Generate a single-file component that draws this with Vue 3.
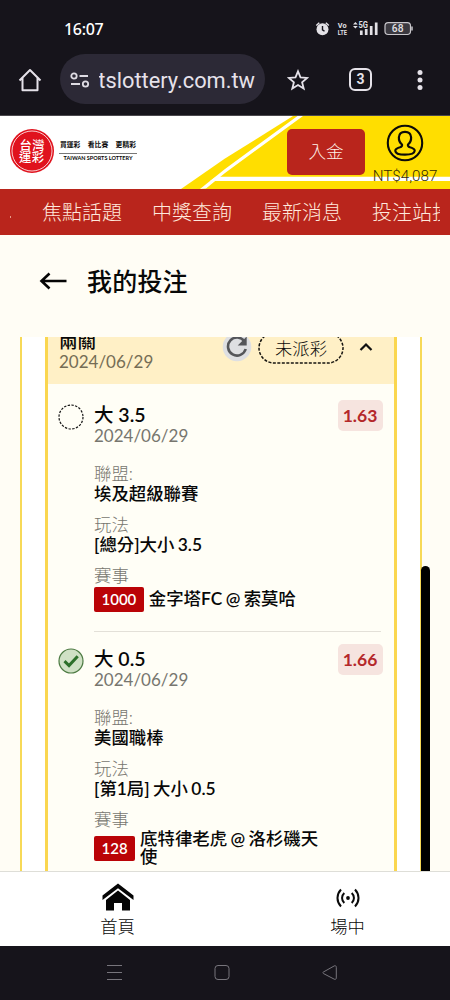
<script setup>
const nav = ['焦點話題', '中獎查詢', '最新消息', '投注站投']
const bets = [
  { pick: '大 3.5', date: '2024/06/29', odds: '1.63', won: false, league: '埃及超級聯賽', play: '[總分]大小 3.5', code: '1000', match: '金字塔FC @ 索莫哈' },
  { pick: '大 0.5', date: '2024/06/29', odds: '1.66', won: true, league: '美國職棒', play: '[第1局] 大小 0.5', code: '128', match: '底特律老虎 @ 洛杉磯天使' },
]
</script>

<template>
  <div class="phone">
    <div class="status">
      <span class="clock">16:07</span>
      <svg class="indicators" width="100" height="20" viewBox="315 18 100 20">
        <circle cx="322.5" cy="29.3" r="6" fill="#e3e1e6" />
        <path d="M316.3 25.5l3-2.7M325.8 22.8l3 2.7" stroke="#e3e1e6" stroke-width="1.5" />
        <path d="M322.5 26v3.8l2 1.5" fill="none" stroke="#16141b" stroke-width="1.4" />
        <text x="337.8" y="28" font-size="7.5" font-weight="700" textLength="8.7" lengthAdjust="spacingAndGlyphs">Vo</text>
        <text x="337.8" y="35" font-size="8" font-weight="700" textLength="9.2" lengthAdjust="spacingAndGlyphs">LTE</text>
        <path d="M353 24.5l2.4-2.5 2.4 2.5zM353 26l2.4 2.5 2.4-2.5z" fill="#e3e1e6" />
        <text x="358.5" y="28.3" font-size="8.5" font-weight="700" textLength="9.5" lengthAdjust="spacingAndGlyphs">5G</text>
        <path d="M361.3 30.5v4.5M366.2 29v6M371.2 26v9M376.2 22.5v12.5" stroke="#e3e1e6" stroke-width="2.7" />
        <rect x="385" y="22.7" width="25.5" height="11.8" rx="3.2" fill="#3b3940" stroke="#c9c7cc" stroke-width="1.2" />
        <path d="M412 26.5v4" stroke="#c9c7cc" stroke-width="1.5" />
        <text x="391.8" y="32.3" font-size="10.2" font-weight="500" textLength="11.8">68</text>
      </svg>
    </div>

    <div class="browser">
      <svg class="home" width="24" height="26" viewBox="0 0 24 26" fill="none" stroke="#e5e2e9" stroke-width="2">
        <path d="M1.5 13.5L12 3l10.5 10.5M4.5 11v12.3h15V11" stroke-linejoin="round" />
      </svg>
      <div class="url">
        <svg width="20" height="16" viewBox="0 0 20 16" fill="none" stroke="#dedbe3" stroke-width="1.8">
          <circle cx="4" cy="4" r="2.7" /><path d="M9.5 4h8.5M1 12h9" /><circle cx="15.5" cy="12" r="2.7" />
        </svg>
        <div class="addr"><span>tslottery.com.tw</span></div>
      </div>
      <svg class="star" width="22" height="22" viewBox="0 0 22 22">
        <path d="M11 2.3l2.5 6.1 6.6.5-5 4.3 1.6 6.4L11 16.1l-5.7 3.5 1.6-6.4-5-4.3 6.6-.5z" fill="none" stroke="#e5e2e9" stroke-width="1.8" />
      </svg>
      <div class="tabs">3</div>
      <svg class="dots" width="6" height="22" viewBox="0 0 6 22" fill="#e5e2e9">
        <circle cx="3" cy="3.5" r="2.5" /><circle cx="3" cy="11" r="2.5" /><circle cx="3" cy="18.5" r="2.5" />
      </svg>
    </div>

    <header class="header">
      <svg class="stripes" width="450" height="73" viewBox="0 116 450 73">
        <rect y="116" width="450" height="73" fill="#fff" />
        <path d="M181 189L225 158.5 293 116H450V189z" fill="#ffde00" />
        <path d="M200 189L225 169 297.5 116h5.5L225 173 206 188.5z" fill="#fff" />
        <path d="M216 176.7H450v4.4H210z" fill="#fff" />
      </svg>
      <div class="brand">
        <svg width="46" height="46" viewBox="0 0 46 46">
          <circle cx="22" cy="22" r="22" fill="#e0121d" />
          <circle cx="22" cy="22" r="20" fill="none" stroke="#fff" stroke-width=".8" />
          <text x="9.5" y="20.5" textLength="25">台灣</text>
          <text x="9" y="33" textLength="25">運彩</text>
        </svg>
        <div class="slogan">
          <div class="zh"><span>買運彩</span><span>看比賽</span><span>更精彩</span></div>
          <div class="en">TAIWAN SPORTS LOTTERY</div>
        </div>
      </div>
      <button class="deposit">入金</button>
      <div class="account">
        <svg width="38" height="38" viewBox="0 0 38 38" fill="none" stroke="#0c0b08">
          <circle cx="19" cy="19" r="17.2" stroke-width="2.1" />
          <path d="M16 20.5c-2.5-2-3.3-4-3.1-7.2.2-3.4 2.6-5.5 6.1-5.5s5.9 2.1 6.1 5.5c.2 3.2-.6 5.2-3.1 7.2-.3 1.5.4 2.3 2 2.8 2.8.8 4.8 1.9 4.7 3.5-.2 2.4-4.5 3.9-9.7 3.9s-9.5-1.5-9.7-3.9c-.1-1.6 1.9-2.7 4.7-3.5 1.6-.5 2.3-1.3 2-2.8z" stroke-width="2.2" />
        </svg>
        <span>NT$4,087</span>
      </div>
    </header>

    <nav class="nav">
      <i></i>
      <div class="links"><span v-for="n in nav" :key="n">{{ n }}</span></div>
    </nav>

    <div class="title">
      <svg width="28" height="20" viewBox="0 0 28 20" fill="none" stroke="#050505" stroke-width="2.6">
        <path d="M27.5 10H2.5M10.5 2.5L2.5 10l8 7.5" />
      </svg>
      <h1>我的投注</h1>
    </div>

    <main class="list">
      <div class="scroll">
        <section class="ticket">
          <div class="tickethead">
            <div class="kind"><b>兩關</b><span>2024/06/29</span></div>
            <svg class="reload" width="30" height="30" viewBox="0 0 30 30">
              <circle cx="15" cy="15" r="14.3" fill="#dedfe2" />
              <path d="M22.5 9.5A9 9 0 1 0 23.7 17" fill="none" stroke="#55565a" stroke-width="2.6" />
              <path d="M24.7 4.5v9h-9z" fill="#55565a" />
            </svg>
            <div class="pending">
              <svg width="86" height="32" viewBox="0 0 86 32"><rect x="1" y="1" width="84" height="30" rx="15" fill="none" stroke="#171510" stroke-width="1.5" stroke-dasharray="3 1.5" /></svg>
              <span>未派彩</span>
            </div>
            <svg class="caret" width="14" height="10" viewBox="0 0 14 10"><path d="M1.5 8L7 2.5 12.5 8" fill="none" stroke="#111" stroke-width="2.2" /></svg>
          </div>

          <article v-for="b in bets" :key="b.code" class="bet">
            <svg class="mark" width="26" height="26" viewBox="0 0 26 26">
              <template v-if="b.won">
                <circle cx="13" cy="13" r="12" fill="#d0e1c5" stroke="#4c7a42" stroke-width="1.2" />
                <path d="M6.5 13.2l4.5 4.3 8.7-9.3" fill="none" stroke="#2d702a" stroke-width="3" />
              </template>
              <circle v-else cx="13" cy="13" r="12" fill="none" stroke="#171717" stroke-width="1.2" stroke-dasharray="2.4 1.37" />
            </svg>
            <div class="body">
              <div class="top">
                <div><div class="pick">{{ b.pick }}</div><div class="date">{{ b.date }}</div></div>
                <span class="odds">{{ b.odds }}</span>
              </div>
              <dl>
                <dt>聯盟:</dt><dd>{{ b.league }}</dd>
                <dt>玩法</dt><dd>{{ b.play }}</dd>
                <dt>賽事</dt>
                <dd class="match"><em>{{ b.code }}</em><span>{{ b.match }}</span></dd>
              </dl>
            </div>
          </article>
        </section>
      </div>
      <div class="thumb"></div>
    </main>

    <footer class="bottom">
      <div class="tab">
        <svg width="32" height="28" viewBox="0 0 32 28" fill="#050505">
          <path d="M.5 12.5L16 .5l15.5 12v4.5L16 5.2.5 17z" />
          <path d="M4 17L16 7.5 28 17v10.5h-8V20h-8v7.5H4z" />
        </svg>
        <span>首頁</span>
      </div>
      <div class="tab live">
        <svg width="24" height="20" viewBox="0 0 24 20" fill="none" stroke="#0a0a0a" stroke-width="2">
          <circle cx="12" cy="10" r="1.9" fill="#0a0a0a" stroke="none" />
          <path d="M8.3 5c-3 2.8-3 7.2 0 10M15.7 5c3 2.8 3 7.2 0 10M5 1.5c-4.7 5-4.7 12 0 17M19 1.5c4.7 5 4.7 12 0 17" />
        </svg>
        <span>場中</span>
      </div>
    </footer>

    <div class="system">
      <svg width="450" height="54" viewBox="0 946 450 54" fill="none" stroke="#77757c" stroke-width="1">
        <path d="M107 965.5h15M107 972.5h15M107 979.5h15" />
        <rect x="215" y="965.5" width="14" height="14" rx="3" />
        <path d="M336.3 967.3c0-1.4-1-2-2.2-1.3l-10.7 6c-.8.5-.8 1 0 1.5l10.7 5.6c1.2.7 2.2.1 2.2-1.2z" />
      </svg>
    </div>
  </div>
</template>

<style>
body { margin: 0; background: #16141b; }
</style>

<style scoped>
.phone { width: 450px; height: 1000px; overflow: hidden; display: flex; flex-direction: column; background: #fffdf5; color: #080808; font-family: Lato, "Noto Sans CJK TC", sans-serif; }
.phone svg { display: block; flex: none; }
.phone * { box-sizing: border-box; }

.status { height: 54px; flex: none; background: #16141b; display: flex; justify-content: space-between; padding: 18px 35px 0 64px; }
.clock { font: 500 16px/22px "Noto Sans", sans-serif; color: #fff; letter-spacing: -.3px; }
.indicators { font-family: Roboto, sans-serif; }
.indicators text { fill: #e3e1e6; }

.browser { height: 62px; flex: none; background: #16141b; border-bottom: 1px solid #4a484d; display: flex; align-items: flex-start; }
.home { margin: 13px 0 0 18px; }
.url { width: 205px; height: 50px; margin-left: 18px; border-radius: 25px; background: #2c2936; display: flex; align-items: center; padding: 2px 0 0 10px; }
.addr { width: 156px; margin: 1px 0 0 9px; overflow: hidden; display: flex; justify-content: flex-end; color: #e6e2eb; font: 400 21.8px/30px Roboto, sans-serif; }
.star { margin: 15px 0 0 22px; }
.tabs { width: 23px; height: 23px; margin: 14px 0 0 40px; border: 2.2px solid #e5e2e9; border-radius: 6px; color: #e5e2e9; font: 700 14px/18.5px Roboto, sans-serif; text-align: center; }
.dots { margin: 15px 0 0 45px; }

.header { height: 72.5px; flex: none; position: relative; display: flex; }
.stripes { position: absolute; inset: 0; }
.brand { position: relative; display: flex; padding: 13px 0 0 10px; width: 287px; }
.brand text { fill: #fff; font: 500 12.3px "Noto Sans CJK TC", sans-serif; }
.slogan { width: 78px; margin: 9px 0 0 3px; }
.zh { display: flex; justify-content: space-between; padding: 0 1px 3px; border-bottom: 1px solid #777; font-weight: 700; font-size: 6.8px; line-height: 13px; height: 16px; white-space: nowrap; }
.en { font: 700 5.5px/9px Lato, sans-serif; text-align: center; white-space: nowrap; }
.deposit { position: relative; width: 78px; height: 46px; margin-top: 12.5px; padding: 0; border: 0; border-radius: 5px; background: #b9251c; color: #fff1e8; font: 300 17.5px/46px Lato, "Noto Sans CJK TC", sans-serif; }
.account { position: relative; width: 80px; display: flex; flex-direction: column; align-items: center; padding-top: 8px; }
.account span { font: 300 15.2px/20px Roboto, sans-serif; margin-top: 4px; color: #332b05; white-space: nowrap; }

.nav { height: 46.5px; flex: none; position: relative; background: #b9251c; color: #ffe9dd; display: flex; align-items: center; padding: 0 10px; }
.nav i { width: 1px; height: 2px; background: #e99b89; margin-top: 11px; }
.links { display: flex; gap: 30px; margin-left: 31px; width: 398px; overflow: hidden; font-size: 20px; font-weight: 300; line-height: 30px; white-space: nowrap; }

.title { height: 102px; flex: none; display: flex; align-items: flex-start; padding: 36px 0 0 39px; }
h1 { margin: -6px 0 0 20px; font-size: 25px; line-height: 33px; font-weight: 500; letter-spacing: .2px; }

.list { height: 534px; flex: none; position: relative; overflow: hidden; padding: 0 28.5px 0 20px; }
.scroll { height: 534px; background: #fff; border: solid #f7d957; border-width: 0 2px; padding: 0 23px; }
.ticket { height: 534px; background: #fffef6; border: solid #fad64f; border-width: 0 3px; }
.thumb { position: absolute; left: 421px; top: 229px; width: 9px; height: 320px; border-radius: 5px; background: #000; }

.tickethead { height: 47px; background: #fff0c6; display: flex; align-items: flex-start; padding-left: 11px; }
.kind { width: 163px; margin-top: -6px; }
.kind b { display: block; font-size: 18.5px; line-height: 20px; font-weight: 500; }
.kind span { display: block; font-size: 17px; line-height: 22px; color: #756d55; }
.reload { margin-top: -5px; }
.pending { margin: -5px 0 0 6px; display: grid; height: 32px; }
.pending svg, .pending span { grid-area: 1 / 1; }
.pending span { text-align: center; font-size: 17.3px; line-height: 33px; font-weight: 300; }
.caret { margin: 5px 0 0 15px; }

.bet { display: flex; padding: 20px 11px 0 10px; height: 243.5px; }
.body { flex: 1; margin-left: 10px; }
.top { display: flex; justify-content: space-between; height: 60px; }
.pick { font-family: "Lato Semibold", Lato, "Noto Sans CJK TC", sans-serif; font-size: 19.5px; line-height: 21px; font-weight: 500; }
.date { font-size: 17px; line-height: 21px; color: #77766f; }
.odds { width: 45px; height: 31px; margin-top: -4px; border-radius: 5px; background: #f6e4df; color: #b4282a; font-size: 17.5px; font-weight: 700; line-height: 31px; text-align: center; }
dl { margin: 0; font-size: 17.4px; line-height: 20px; }
dt { color: #77766f; font-weight: 300; }
dd { margin: 0 0 11px; font-family: "Lato Semibold", Lato, "Noto Sans CJK TC", sans-serif; font-weight: 500; word-spacing: -.9px; }
.match { display: flex; align-items: center; min-height: 26px; margin: 0; }
.match em { flex: none; padding: 0 7.5px; height: 25px; border-radius: 2px; background: #ba0307; color: #fff; font-style: normal; font-size: 15px; font-weight: 600; line-height: 25px; }
.match span { width: 184px; margin-left: 5px; line-height: 18.5px; }
.bet:not(:last-child) .body::after { content: ""; display: block; width: 287px; height: 1px; margin-top: 19px; background: #e3e0d8; }

.bottom { height: 75px; flex: none; border-top: 1px solid #deded8; background: #fff; display: flex; }
.tab { flex: none; width: 235px; display: flex; flex-direction: column; align-items: center; padding-top: 11px; font-size: 17.3px; font-weight: 300; line-height: 24px; }
.tab span { margin-top: 4px; }
.live { width: 225px; padding-top: 16px; }
.live span { margin-top: 7px; }
.system { height: 54px; flex: none; background: #16141b; }
</style>
